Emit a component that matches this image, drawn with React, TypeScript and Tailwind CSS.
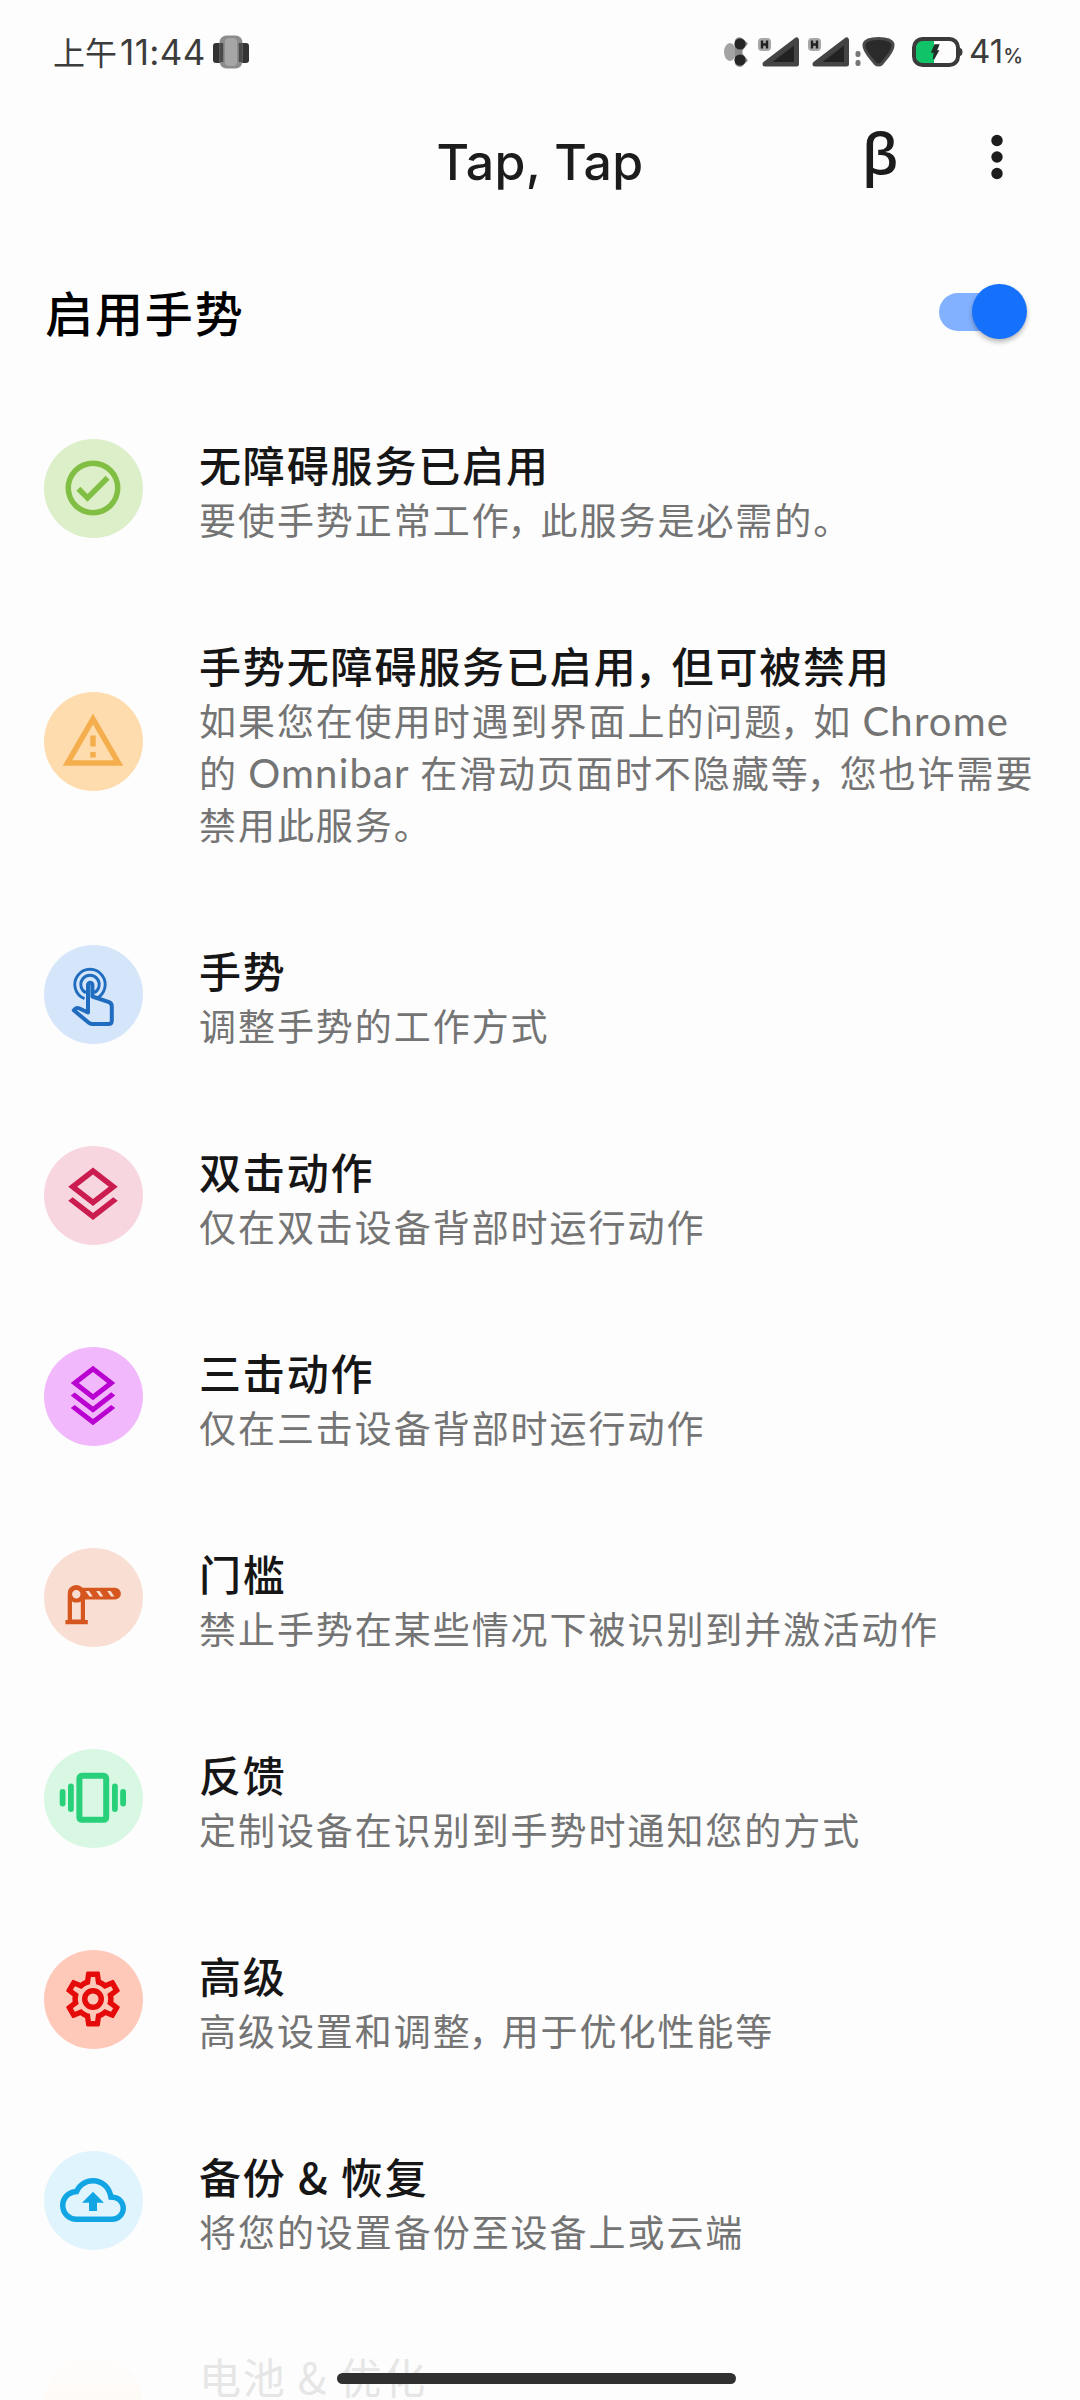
import React, { type ReactNode } from "react";

const CJK = "font-['Noto_Sans_CJK_SC',sans-serif]";

// Full-width commas are set tighter than the other glyphs; Latin runs use a rounder face.
function Line({ text, comma, latin }: { text: string; comma: string; latin: string }) {
  return (
    <>
      {text.split(/(，|[A-Za-z]+)/).map((part, i) =>
        part === "，" ? (
          <span key={i} className={comma}>
            ，
          </span>
        ) : /^[A-Za-z]+$/.test(part) ? (
          <span key={i} className={latin}>
            {part}
          </span>
        ) : (
          part
        ),
      )}
    </>
  );
}

function Icon({ d, viewBox = "0 0 24 24" }: { d: string; viewBox?: string }) {
  return (
    <svg viewBox={viewBox} className="size-[66px] shrink-0 fill-current">
      <path fillRule="evenodd" d={d} />
    </svg>
  );
}

const CHECK =
  "M12 2A10 10 0 0 0 2 12A10 10 0 0 0 12 22A10 10 0 0 0 22 12A10 10 0 0 0 12 2M12 20A8 8 0 0 1 4 12A8 8 0 0 1 12 4A8 8 0 0 1 20 12A8 8 0 0 1 12 20M16.59 7.58L10 14.17L7.41 11.59L6 13L10 17L18 9Z";
const WARN =
  "M12 5.99L19.53 19H4.47L12 5.99M12 2L1 21h22L12 2zm1 14h-2v2h2v-2zm0-6h-2v4h2v-4z";
const LAYERS =
  "M12,18.54L19.37,12.8L21,14.07L12,21.07L3,14.07L4.62,12.81L12,18.54M12,16L3,9L12,2L21,9L12,16M12,4.53L6.26,9L12,13.47L17.74,9L12,4.53Z";
const LAYERS_TRIPLE = LAYERS + "M12,23.61L19.37,17.87L21,19.14L12,26.14L3,19.14L4.62,17.88L12,23.61Z";
const COG =
  "M12,8A4,4 0 0,1 16,12A4,4 0 0,1 12,16A4,4 0 0,1 8,12A4,4 0 0,1 12,8M12,10A2,2 0 0,0 10,12A2,2 0 0,0 12,14A2,2 0 0,0 14,12A2,2 0 0,0 12,10M10,22C9.75,22 9.54,21.82 9.5,21.58L9.13,18.93C8.5,18.68 7.96,18.34 7.44,17.94L4.95,18.95C4.73,19.03 4.46,18.95 4.34,18.73L2.34,15.27C2.21,15.05 2.27,14.78 2.46,14.63L4.57,12.97L4.5,12L4.57,11L2.46,9.37C2.27,9.22 2.21,8.95 2.34,8.73L4.34,5.27C4.46,5.05 4.73,4.96 4.95,5.05L7.44,6.05C7.96,5.66 8.5,5.32 9.13,5.07L9.5,2.42C9.54,2.18 9.75,2 10,2H14C14.25,2 14.46,2.18 14.5,2.42L14.87,5.07C15.5,5.32 16.04,5.66 16.56,6.05L19.05,5.05C19.27,4.96 19.54,5.05 19.66,5.27L21.66,8.73C21.79,8.95 21.73,9.22 21.54,9.37L19.43,11L19.5,12L19.43,13L21.54,14.63C21.73,14.78 21.79,15.05 21.66,15.27L19.66,18.73C19.54,18.95 19.27,19.04 19.05,18.95L16.56,17.95C16.04,18.34 15.5,18.68 14.87,18.93L14.5,21.58C14.46,21.82 14.25,22 14,22H10M11.25,4L10.88,6.61C9.68,6.86 8.62,7.5 7.85,8.39L5.44,7.35L4.69,8.65L6.8,10.2C6.4,11.37 6.4,12.64 6.8,13.8L4.68,15.36L5.43,16.66L7.86,15.62C8.63,16.5 9.68,17.14 10.87,17.38L11.24,20H12.76L13.13,17.39C14.32,17.14 15.37,16.5 16.14,15.62L18.57,16.66L19.32,15.36L17.2,13.81C17.6,12.64 17.6,11.37 17.2,10.2L19.31,8.65L18.56,7.35L16.15,8.39C15.38,7.5 14.32,6.86 13.12,6.62L12.75,4H11.25Z";
const CLOUD =
  "M19.35 10.04C18.67 6.59 15.64 4 12 4 9.11 4 6.6 5.64 5.35 8.04 2.34 8.36 0 10.91 0 14c0 3.31 2.69 6 6 6h13c2.76 0 5-2.24 5-5 0-2.64-2.05-4.78-4.65-4.96zM19 18H6c-2.21 0-4-1.79-4-4 0-2.05 1.53-3.76 3.56-3.97l1.07-.11.5-.95C8.08 7.14 9.94 6 12 6c2.62 0 4.88 1.86 5.39 4.43l.3 1.5 1.53.11c1.56.1 2.78 1.41 2.78 2.96 0 1.65-1.35 3-3 3zM8 13h2.55v3h2.9v-3H16l-4-4z";

function TapIcon() {
  return (
    <svg viewBox="0 0 66 66" className="size-[66px] fill-none stroke-current">
      <path strokeWidth="2.9" d="M24.5 37.6A15.2 15.2 0 1 1 35.5 37.6" />
      <path strokeWidth="2.9" d="M26 31.8A9.2 9.2 0 1 1 34 31.8" />
      <path
        strokeWidth="4"
        strokeLinejoin="round"
        d="M28 51.5V24a2.2 2.2 0 0 1 4.4 0V35.5L49 41.2Q51.8 42.3 51.8 45.5V59.500Q51.8 63 48.5 63H32.5Q30.2 63 28.5 61.5L13.8 49.3Q16.2 45.8 19.5 47.5Z"
      />
    </svg>
  );
}

function BarrierIcon() {
  return (
    <svg viewBox="0 0 66 66" className="size-[66px] fill-current">
      <path
        fillRule="evenodd"
        d="M7.7 56V30.2A8.6 8.6 0 0 1 22.6 23.8H55A5.9 5.9 0 0 1 55 35.6H25V56H27.8V60.2H5.4V56ZM16.3 26A4.2 4.2 0 1 0 16.3 34.4A4.2 4.2 0 1 0 16.3 26ZM12 37.4V55.6H20.8V37.4Q16.4 39.8 12 37.4ZM25.6 27L29.4 32.6H32.8L29 27ZM36.2 27L40 32.6H43.4L39.6 27ZM47.2 27L51 32.6H54.4L50.6 27Z"
      />
    </svg>
  );
}

function VibrateIcon() {
  return (
    <svg viewBox="0 0 68 66" className="h-[66px] w-[68px]">
      <rect x="20.4" y="10.8" width="26.8" height="44" rx="2.4" className="fill-none stroke-current stroke-[6px]" />
      <g className="fill-current">
        <rect x="0.7" y="24" width="5.8" height="17.4" rx="2.9" />
        <rect x="9" y="18.6" width="5.8" height="28.4" rx="2.9" />
        <rect x="53" y="18.6" width="5.8" height="28.4" rx="2.9" />
        <rect x="61.2" y="24" width="5.8" height="17.4" rx="2.9" />
      </g>
    </svg>
  );
}

type Item = { title: string; lines: string[]; tone: string; icon: ReactNode };

const ITEMS: Item[] = [
  { title: "无障碍服务已启用", lines: ["要使手势正常工作，此服务是必需的。"], tone: "bg-[#dcefc9] text-[#80bf43]", icon: <Icon d={CHECK} /> },
  {
    title: "手势无障碍服务已启用，但可被禁用",
    lines: ["如果您在使用时遇到界面上的问题，如 Chrome", "的 Omnibar 在滑动页面时不隐藏等，您也许需要", "禁用此服务。"],
    tone: "bg-[#ffdcae] text-[#f5ae4e]",
    icon: <Icon d={WARN} />,
  },
  { title: "手势", lines: ["调整手势的工作方式"], tone: "bg-[#d5e5fa] text-[#206dc0]", icon: <TapIcon /> },
  { title: "双击动作", lines: ["仅在双击设备背部时运行动作"], tone: "bg-[#f8d6df] text-[#cb1c50]", icon: <Icon d={LAYERS} /> },
  {
    title: "三击动作",
    lines: ["仅在三击设备背部时运行动作"],
    tone: "bg-[#f1b9fb] text-[#b900d1]",
    icon: <Icon d={LAYERS_TRIPLE} viewBox="-1.35 0.92 26.7 26.7" />,
  },
  { title: "门槛", lines: ["禁止手势在某些情况下被识别到并激活动作"], tone: "bg-[#f9dfd3] text-[#d5571f]", icon: <BarrierIcon /> },
  { title: "反馈", lines: ["定制设备在识别到手势时通知您的方式"], tone: "bg-[#d8f8e4] text-[#28d079]", icon: <VibrateIcon /> },
  { title: "高级", lines: ["高级设置和调整，用于优化性能等"], tone: "bg-[#ffc9ba] text-[#e50b0b]", icon: <Icon d={COG} /> },
  { title: "备份 & 恢复", lines: ["将您的设置备份至设备上或云端"], tone: "bg-[#e0f4fd] text-[#12a5e3]", icon: <Icon d={CLOUD} /> },
];

function Row({ item }: { item: Item }) {
  return (
    <li className="flex items-center py-[45px] pl-11">
      <div className={`flex size-[99px] shrink-0 items-center justify-center rounded-full pr-0.5 pb-px ${item.tone}`}>{item.icon}</div>
      <div className="ml-14 pt-px whitespace-nowrap">
        <div className="h-[58px] pt-px text-[42px] leading-[58px] font-medium tracking-[1.85px] text-[#161616]">
          <Line text={item.title} comma="-ml-[3px] tracking-[-5px]" latin="" />
        </div>
        {item.lines.map((l) => (
          <div key={l} className="h-[52px] pt-px text-[37px] leading-[52px] tracking-[1.95px] text-[#747474]">
            <Line text={l} comma="-ml-[3px] tracking-[-4px]" latin="font-['Lato',sans-serif] text-[40px] tracking-[1.2px]" />
          </div>
        ))}
      </div>
    </li>
  );
}

function Signal() {
  return (
    <svg viewBox="0 0 44 34" className="h-[34px] w-[44px]">
      <rect x="1" y="3" width="13" height="13" rx="4" fill="#a8a8a8" />
      <path d="M5 5.5V13.5M10 5.5V13.5M5 9.5H10" stroke="#222" strokeWidth="2.4" />
      <path d="M8 29L39.5 5V29Z" fill="#333" stroke="#444" strokeWidth="5" strokeLinejoin="round" />
      <path d="M16 27L37 11V27Z" fill="#222" />
    </svg>
  );
}

function StatusBar() {
  return (
    <div className="flex h-[106px] items-start pr-[57px] pl-[53px] pt-[34px] text-[#3c3c3c]">
      <div className="flex h-9 items-center text-[32px] leading-9">
        <span className="-mt-[3px]">上午</span>
        <span className="ml-[3px] font-['Inter',sans-serif] text-[35px] tracking-[0.4px]">11:44</span>
      </div>
      <svg viewBox="0 0 38 36" className="ml-[6px] h-9 w-[38px]">
        <rect x="1" y="9" width="11" height="20" rx="3" fill="#333" />
        <rect x="26" y="9" width="11" height="20" rx="3" fill="#333" />
        <rect x="7.500" y="1.500" width="23" height="33" rx="7" fill="#8c8c8c" />
        <rect x="13" y="4" width="12" height="28" rx="4" fill="#a6a6a6" />
        <path d="M9.500 9V28M28.500 9V28" stroke="#4a4a4a" strokeWidth="3.500" />
      </svg>
      <div className="ml-auto flex h-9 items-center">
        <svg viewBox="0 0 28 34" className="h-[34px] w-7">
          <ellipse cx="7" cy="17" rx="6" ry="9" fill="#a3a3a3" />
          <path d="M12 5Q14 1 19 3L25 8.500L19.500 15.500V18.500L25 25.500L19 31.500Q14 33 12 29Z" fill="#8a8a8a" />
          <circle cx="17" cy="9" r="5.600" fill="#252525" />
          <circle cx="17" cy="25" r="5.600" fill="#252525" />
        </svg>
        <div className="ml-1.5 flex gap-1.5">
          <Signal />
          <Signal />
        </div>
        <svg viewBox="0 0 44 34" className="ml-1 h-[34px] w-11">
          <rect x="0.500" y="16" width="5" height="6" rx="2" fill="#777" />
          <rect x="0.500" y="25" width="5" height="6" rx="2" fill="#777" />
          <path d="M9 9Q11 3.500 23.500 3.500T38 9Q38.500 14 33 21L27 28.500Q23.500 31.500 20 28.500L14 21Q8.500 14 9 9Z" fill="#2a2a2a" stroke="#4a4a4a" strokeWidth="3" />
        </svg>
        <svg viewBox="0 0 52 32" className="ml-3 h-8 w-[52px]">
          <path d="M11 4H20V28H11Q5 28 5 21V11Q5 4 11 4Z" fill="#10c268" />
          <rect x="18" y="4" width="5" height="24" fill="#10c268" />
          <rect x="3" y="3" width="44" height="26" rx="8.500" fill="none" stroke="#3a3a3a" strokeWidth="4" />
          <path d="M49 12Q51.500 12.500 51.500 16T49 20Z" fill="#3a3a3a" />
          <path d="M24 9L21 16H23.500L22.500 23L27 15H25L27.500 9Z" fill="#1f2f28" stroke="#1f2f28" strokeWidth="1.600" />
        </svg>
        <div className="ml-1.5 flex items-baseline pt-[3px] font-['Inter',sans-serif]">
          <span className="text-[33px] leading-9">41</span>
          <span className="text-[20px] leading-9 font-medium">%</span>
        </div>
      </div>
    </div>
  );
}

export default function App() {
  return (
    <div className={`relative h-[2400px] w-[1080px] overflow-hidden bg-[#fdfdfd] ${CJK}`} lang="zh-CN">
      <StatusBar />
      <header className="grid h-[106px] grid-cols-3 items-center font-['Inter',sans-serif] text-[#1c1c1c]">
        <div />
        <h1 className="pt-[5px] text-center text-[50px] leading-[60px] font-medium tracking-[0.3px] whitespace-nowrap">Tap, Tap</h1>
        <div className="flex items-center justify-end pr-[77px] pb-1">
          <span className="mr-[93px] pb-2.5 font-['Open_Sans',sans-serif] text-[56px] leading-[60px] font-semibold">β</span>
          <svg viewBox="0 0 12 46" className="h-[46px] w-3 fill-current">
            <circle cx="6" cy="6.500" r="5.700" />
            <circle cx="6" cy="23" r="5.700" />
            <circle cx="6" cy="39.500" r="5.700" />
          </svg>
        </div>
      </header>
      <div className="flex h-[176px] items-start justify-between pt-[66px] pr-[53px] pl-[45px]">
        <div className="h-[66px] text-[48px] leading-[66px] font-medium tracking-[1.9px] text-black">启用手势</div>
        <div className="mt-[6px] flex h-[55px] w-[88px] items-center">
          <div className="flex h-[38px] w-[74px] items-center justify-end rounded-full bg-[#82b2ff]">
            <div className="-mr-3.5 size-[55px] shrink-0 rounded-full bg-[#1570fb] shadow-[0_3px_5px_rgba(0,0,0,0.28)]" />
          </div>
        </div>
      </div>
      <ul>
        {ITEMS.map((item) => (
          <Row key={item.title} item={item} />
        ))}
        <li className="flex items-start pt-[53px] pl-11">
          <div className="size-[99px] shrink-0 rounded-full bg-linear-to-b from-[#fdfdfd] to-[#fff6ee]" />
          <div className="ml-14 h-[44px] text-[42px] leading-[44px] tracking-[1.8px] text-[#e6e6e6]">电池 &amp; 优化</div>
        </li>
      </ul>
      <div className="absolute bottom-4 left-[337px] h-[11px] w-[399px] rounded-full bg-[#303030]" />
    </div>
  );
}
